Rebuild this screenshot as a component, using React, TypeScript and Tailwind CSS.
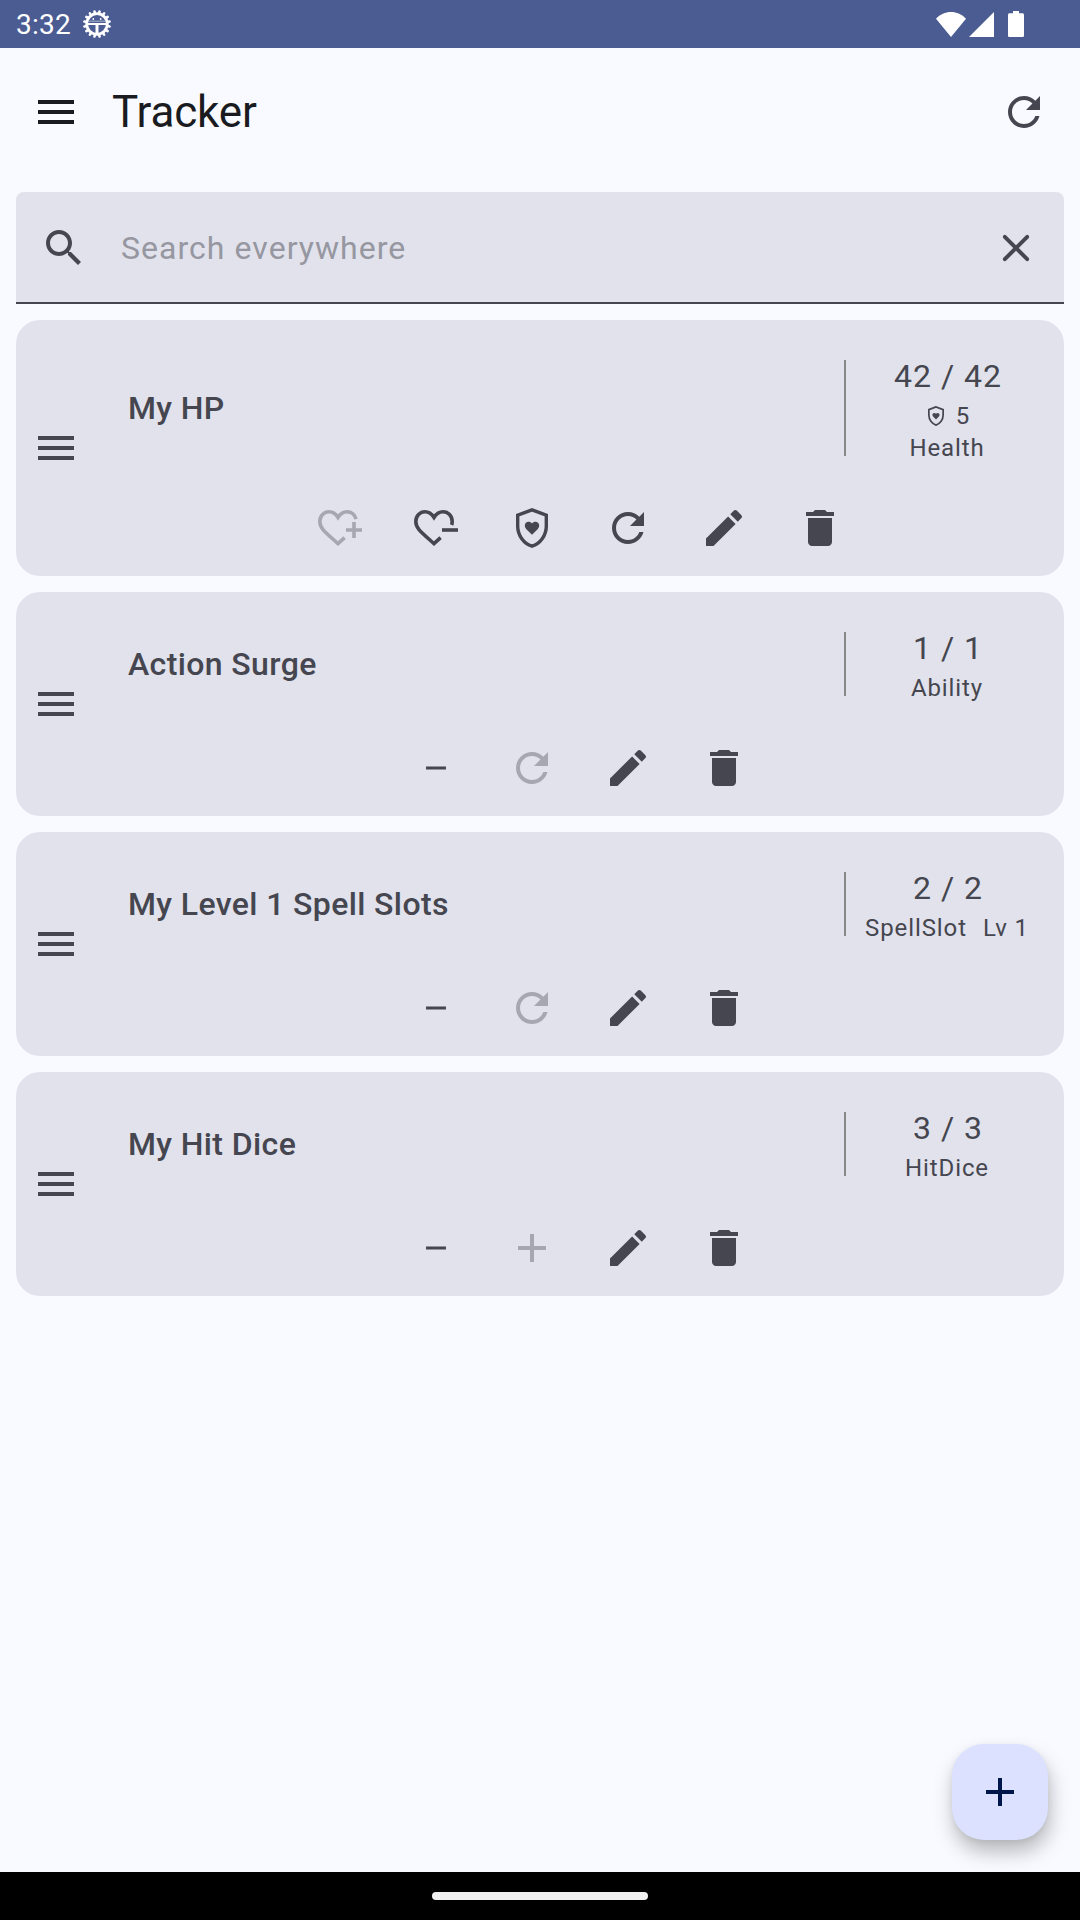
import React from "react";

type IconProps = { className?: string };

function Glyph({ d, className = "size-12" }: IconProps & { d: string }) {
  return (
    <svg viewBox="0 0 24 24" fill="currentColor" className={className}>
      <path d={d} />
    </svg>
  );
}

const MENU = "M3 18h18v-2H3v2zm0-5h18v-2H3v2zm0-7v2h18V6H3z";
const REFRESH =
  "M17.65 6.35C16.2 4.9 14.21 4 12 4c-4.42 0-7.99 3.58-7.99 8s3.57 8 7.99 8c3.73 0 6.84-2.55 7.73-6h-2.08c-.82 2.33-3.04 4-5.65 4-3.31 0-6-2.69-6-6s2.69-6 6-6c1.66 0 3.14.69 4.22 1.78L13 11h7V4l-2.35 2.35z";
const EDIT =
  "M3 17.25V21h3.75L17.81 9.94l-3.75-3.75L3 17.25zM20.71 7.04c.39-.39.39-1.02 0-1.41l-2.34-2.34c-.39-.39-1.02-.39-1.41 0l-1.83 1.83 3.75 3.75 1.83-1.83z";
const DELETE = "M6 19c0 1.1.9 2 2 2h8c1.1 0 2-.9 2-2V7H6v12zM19 4h-3.5l-1-1h-5l-1 1H5v2h14V4z";
const SEARCH =
  "M15.5 14h-.79l-.28-.27C15.41 12.59 16 11.11 16 9.5 16 5.91 13.09 3 9.5 3S3 5.91 3 9.5 5.91 16 9.5 16c1.61 0 3.09-.59 4.23-1.57l.27.28v.79l5 4.99L20.49 19l-4.99-5zm-6 0C7.01 14 5 11.99 5 9.5S7.01 5 9.5 5 14 7.01 14 9.5 11.99 14 9.5 14z";
const CLOSE =
  "M18.3 5.71c-.39-.39-1.02-.39-1.41 0L12 10.59 7.11 5.7c-.39-.39-1.02-.39-1.41 0s-.39 1.02 0 1.41L10.59 12 5.7 16.89c-.39.39-.39 1.02 0 1.41s1.02.39 1.41 0L12 13.41l4.89 4.89c.39.39 1.02.39 1.41 0s.39-1.02 0-1.41L13.41 12l4.89-4.89c.38-.38.38-1.02 0-1.4z";
const ADD = "M19 13h-6v6h-2v-6H5v-2h6V5h2v6h6v2z";
const REMOVE = "M7 11.25h10v1.5H7z";

function HeartPlus() {
  return (
    <svg viewBox="0 0 24 24" fill="none" stroke="currentColor" strokeWidth="1.8" className="size-12">
      <path d="M14.3 16.8 11 19.8C7.4 16.6 4.9 14.5 3.5 12.8 2.3 11.4 1.9 10.2 1.9 8.8 1.9 6 4 3.9 6.5 3.9 8.4 3.9 9.9 5 11 6.7 12.1 5 13.6 3.9 15.5 3.9 17.8 3.9 19.5 5.4 20 7.6" />
      <path d="M15 13h8M19 9v8" />
    </svg>
  );
}

function HeartMinus() {
  return (
    <svg viewBox="0 0 24 24" fill="none" stroke="currentColor" strokeWidth="1.8" className="size-12">
      <path d="M14.3 16.8 11 19.8C7.4 16.6 4.9 14.5 3.5 12.8 2.3 11.4 1.9 10.2 1.9 8.8 1.9 6 4 3.9 6.5 3.9 8.4 3.9 9.9 5 11 6.7 12.1 5 13.6 3.9 15.5 3.9 18.1 3.9 20.1 6 20.1 8.8 20.1 9.4 20 10 19.8 10.5" />
      <path d="M15 13h8" />
    </svg>
  );
}

function ShieldHeart({ className = "size-12" }: IconProps) {
  return (
    <svg viewBox="0 0 24 24" className={className}>
      <path
        d="M12 2.9 4.85 5.6V11.1C4.85 15.7 7.9 19.8 12 21.1 16.1 19.8 19.15 15.7 19.15 11.1V5.6Z"
        fill="none"
        stroke="currentColor"
        strokeWidth="1.7"
      />
      <path
        d="M12 15.4 9.3 12.7C8.7 12.1 8.4 11.6 8.4 10.8 8.4 9.7 9.3 8.9 10.3 8.9 11 8.9 11.6 9.2 12 9.8 12.4 9.2 13 8.9 13.7 8.9 14.7 8.9 15.6 9.7 15.6 10.8 15.6 11.6 15.3 12.1 14.7 12.7Z"
        fill="currentColor"
      />
    </svg>
  );
}

const TEETH = Array.from({ length: 16 }, (_, i) => i * 22.5 + 11.25);

function DebugBadge() {
  return (
    <svg viewBox="0 0 28 28" className="size-7" fill="none" stroke="white">
      <circle cx="14" cy="14" r="10.3" strokeWidth="2.8" />
      {TEETH.map((a) => (
        <path key={a} d="M14 3.4V1.2" strokeWidth="2.6" strokeLinecap="round" transform={`rotate(${a} 14 14)`} />
      ))}
      <path d="M4 14h20" strokeWidth="2" />
      <path d="M5.500 11.200h17" strokeWidth="0.8" strokeOpacity=".7" />
      <path d="M14 14v10" strokeWidth="3" />
      <circle cx="10.3" cy="9" r=".9" fill="white" stroke="none" />
      <circle cx="17.7" cy="9" r=".9" fill="white" stroke="none" />
    </svg>
  );
}

function StatusBar() {
  return (
    <div className="flex h-12 shrink-0 items-center justify-between bg-[#4a5c92] pl-4 pr-14 text-white">
      <div className="flex items-center gap-3">
        <span className="pt-0.5 text-[28px] leading-8 tracking-[0.25px]">3:32</span>
        <DebugBadge />
      </div>
      <div className="flex items-center">
        <svg viewBox="0 0 30 25" fill="currentColor" className="h-[25px] w-[30px]">
          <path d="M15 25 0 6.8C4 2.3 9.3 0 15 0s11 2.3 15 6.8Z" />
        </svg>
        <svg viewBox="0 0 25 25" fill="currentColor" className="ml-[3px] mt-px size-[25px]">
          <path d="M0 25 25 0v25Z" />
        </svg>
        <svg viewBox="0 0 16 26" fill="currentColor" className="ml-3.5 h-[26px] w-4">
          <path d="M5 0h6v2.2h3.4c.9 0 1.6.7 1.6 1.6v20.6c0 .9-.7 1.6-1.6 1.6H1.6C.7 26 0 25.3 0 24.4V3.8c0-.9.7-1.6 1.6-1.6H5Z" />
        </svg>
      </div>
    </div>
  );
}

type Action = { label: string; icon: React.ReactNode; disabled?: boolean };

const edit: Action = { label: "Edit", icon: <Glyph d={EDIT} /> };
const del: Action = { label: "Delete", icon: <Glyph d={DELETE} /> };
const minus: Action = { label: "Use", icon: <Glyph d={REMOVE} /> };
const resetOff: Action = { label: "Reset", icon: <Glyph d={REFRESH} />, disabled: true };

type Tracker = {
  name: string;
  value: string;
  temp?: string;
  kind: string;
  level?: string;
  actions: Action[];
};

const trackers: Tracker[] = [
  {
    name: "My HP",
    value: "42 / 42",
    temp: "5",
    kind: "Health",
    actions: [
      { label: "Heal", icon: <HeartPlus />, disabled: true },
      { label: "Damage", icon: <HeartMinus /> },
      { label: "Temporary", icon: <ShieldHeart /> },
      { label: "Reset", icon: <Glyph d={REFRESH} /> },
      edit,
      del,
    ],
  },
  { name: "Action Surge", value: "1 / 1", kind: "Ability", actions: [minus, resetOff, edit, del] },
  {
    name: "My Level 1 Spell Slots",
    value: "2 / 2",
    kind: "SpellSlot",
    level: "Lv 1",
    actions: [minus, resetOff, edit, del],
  },
  {
    name: "My Hit Dice",
    value: "3 / 3",
    kind: "HitDice",
    actions: [minus, { label: "Add", icon: <Glyph d={ADD} />, disabled: true }, edit, del],
  },
];

function TrackerCard({ item }: { item: Tracker }) {
  return (
    <div className="flex rounded-3xl bg-[#e1e2ec] text-[#45464f]">
      <div className="flex w-20 items-center justify-center">
        <Glyph d={MENU} />
      </div>
      <div className="flex flex-1 flex-col pt-8">
        <div className="flex items-stretch pl-8 pr-4">
          <div className="flex flex-1 items-center text-[32px] font-medium leading-[48px] tracking-[0.38px]">
            {item.name}
          </div>
          <div className="my-2 w-0.5 bg-[#888888]" />
          <div className="flex w-[202px] flex-col items-center text-2xl tracking-[0.9px]">
            <div className="pl-0.5 text-[32px] leading-[48px] tracking-[1px]">{item.value}</div>
            {item.temp && (
              <div className="flex h-8 items-center gap-2">
                <ShieldHeart className="size-6" />
                <span>{item.temp}</span>
              </div>
            )}
            <div className="flex gap-4">
              <span>{item.kind}</span>
              {item.level && <span>{item.level}</span>}
            </div>
          </div>
        </div>
        <div className="mt-4 flex justify-center">
          {item.actions.map((a) => (
            <button
              key={a.label}
              aria-label={a.label}
              disabled={a.disabled}
              className="flex size-24 items-center justify-center disabled:text-[#a6a7b0]"
            >
              {a.icon}
            </button>
          ))}
        </div>
      </div>
    </div>
  );
}

export default function App() {
  return (
    <div className="relative flex h-[1920px] w-[1080px] flex-col overflow-hidden bg-[#f8faff] font-['Roboto',sans-serif]">
      <StatusBar />
      <header className="flex h-32 shrink-0 items-center px-8 text-[#1a1b21]">
        <Glyph d={MENU} />
        <h1 className="ml-8 flex-1 text-[44px] leading-[56px] tracking-[-0.15px]">Tracker</h1>
        <Glyph d={REFRESH} className="size-12 text-[#45464f]" />
      </header>
      <main className="flex flex-1 flex-col gap-4 px-4 pt-4">
        <div className="flex h-28 items-center rounded-t-lg border-b-2 border-[#45464f] bg-[#e1e2ec] px-6 text-[#45464f]">
          <Glyph d={SEARCH} className="mt-0.5 size-12" />
          <span className="ml-[33px] flex-1 pt-0.5 text-[32px] leading-[48px] tracking-[1.04px] text-[#9697a0]">
            Search everywhere
          </span>
          <Glyph d={CLOSE} className="mt-0.5 size-12" />
        </div>
        {trackers.map((t) => (
          <TrackerCard key={t.name} item={t} />
        ))}
      </main>
      <button
        aria-label="Add tracker"
        className="absolute bottom-20 right-8 flex size-24 items-center justify-center rounded-[32px] bg-[#dbe1ff] text-[#00174b] shadow-[2px_12px_20px_rgba(0,0,0,0.26),0_2px_6px_rgba(0,0,0,0.06)]"
      >
        <Glyph d={ADD} />
      </button>
      <div className="relative flex h-12 shrink-0 items-center justify-center bg-black">
        <div className="h-2 w-[216px] rounded-full bg-[#f0f0f0]" />
      </div>
    </div>
  );
}
